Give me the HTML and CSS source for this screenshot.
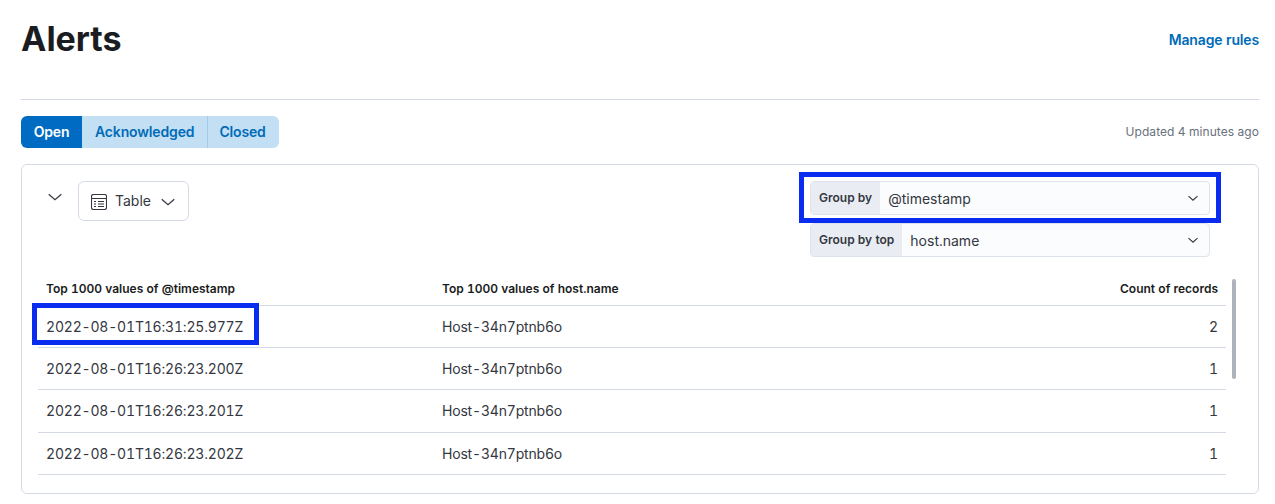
FILE: index.html
```html
<!DOCTYPE html>
<html lang="en">
<head>
  <meta charset="UTF-8" />
  <title>Alerts</title>
  <link rel="stylesheet" href="styles.css">
</head>
<body>

  <div class="page-header">
    <h1>Alerts</h1>
    <a class="manage-link" href="#">Manage rules</a>
  </div>

  <div class="status-row">
    <div class="tabs">
      <button class="tab active">Open</button>
      <button class="tab">Acknowledged</button>
      <button class="tab">Closed</button>
    </div>
    <div class="updated">Updated 4 minutes ago</div>
  </div>

  <div class="panel">
    <div class="toolbar">
      <div class="toolbar-left">
        <svg class="collapse" width="16" height="16" viewBox="0 0 16 16"><path d="M1.700 5.200L8 10.800l6.300-5.600" fill="none" stroke="#343741" stroke-width="1.200"/></svg>
        <button class="chart-type">
          <svg width="16" height="16" viewBox="0 0 16 16" fill="none" stroke="#343741" stroke-width="1.100">
            <rect x="0.500" y="0.500" width="15" height="15" rx="2"/>
            <path d="M1 4.500h14M3 7.500h2M3 10h2M3 12.500h2M7 7.500h6M7 10h6M7 12.500h6"/>
          </svg>
          <span class="chart-type-name">Table</span>
          <svg class="chart-type-arrow" width="16" height="16" viewBox="0 0 16 16"><path d="M1.700 5.200L8 10.800l6.300-5.600" fill="none" stroke="#343741" stroke-width="1.200"/></svg>
        </button>
      </div>
      <div class="selects">
        <div class="select highlighted">
          <div class="select-label">Group by</div>
          <div class="select-value">@timestamp</div>
          <svg width="12" height="12" viewBox="0 0 16 16"><path d="M2 5.500l6 5.500 6-5.500" fill="none" stroke="#343741" stroke-width="1.500"/></svg>
        </div>
        <div class="select">
          <div class="select-label">Group by top</div>
          <div class="select-value">host.name</div>
          <svg width="12" height="12" viewBox="0 0 16 16"><path d="M2 5.500l6 5.500 6-5.500" fill="none" stroke="#343741" stroke-width="1.500"/></svg>
        </div>
      </div>
    </div>

    <div class="table-wrap">
      <table>
        <thead>
          <tr>
            <th class="col-time">Top 1000 values of @timestamp</th>
            <th>Top 1000 values of host.name</th>
            <th class="num">Count of records</th>
          </tr>
        </thead>
        <tbody>
          <tr>
            <td class="highlighted-cell">2022-08-01T16:31:25.977Z</td>
            <td>Host-34n7ptnb6o</td>
            <td class="num">2</td>
          </tr>
          <tr>
            <td>2022-08-01T16:26:23.200Z</td>
            <td>Host-34n7ptnb6o</td>
            <td class="num">1</td>
          </tr>
          <tr>
            <td>2022-08-01T16:26:23.201Z</td>
            <td>Host-34n7ptnb6o</td>
            <td class="num">1</td>
          </tr>
          <tr>
            <td>2022-08-01T16:26:23.202Z</td>
            <td>Host-34n7ptnb6o</td>
            <td class="num">1</td>
          </tr>
        </tbody>
      </table>
      <div class="scrollbar"></div>
    </div>
  </div>

</body>
</html>
```

FILE: styles.css
```css
html, body {
  margin: 0;
  padding: 0;
  background: #fff;
}

body {
  padding: 0 16px 0 21px;
  font-family: Inter, "Liberation Sans", sans-serif;
  font-variant-numeric: tabular-nums;
  color: #343741;
}

/* title row */
.page-header {
  display: flex;
  justify-content: space-between;
  align-items: center;
  height: 100px;
  padding-bottom: 21px;
  box-sizing: border-box;
  border-bottom: 1px solid #d3dae6;
}
.page-header h1 {
  margin: 0;
  font-size: 34px;
  line-height: 40px;
  font-weight: 700;
  color: #1a1c21;
}
.manage-link {
  font-size: 14px;
  font-weight: 600;
  letter-spacing: -0.150px;
  color: #006bb8;
  text-decoration: none;
}

/* open / acknowledged / closed */
.status-row {
  display: flex;
  justify-content: space-between;
  align-items: center;
  margin-top: 16px;
}
.tabs {
  display: flex;
  height: 32px;
  border-radius: 6px;
  overflow: hidden;
}
.tab {
  border: none;
  padding: 0 13px 2px 11px;
  background: #c2dff3;
  color: #006bb8;
  font-family: inherit;
  font-size: 14px;
  font-weight: 600;
  letter-spacing: -0.150px;
}
.tab + .tab {
  border-left: 1px solid #a2cbe9;
}
.tab.active {
  width: 61px;
  padding: 0 0 2px;
  background: #006bc2;
  color: #fff;
}
.tab.active + .tab {
  border-left: none;
  padding: 0 13px 2px;
}
.updated {
  padding-bottom: 2px;
  font-size: 12px;
  letter-spacing: 0.070px;
  color: #69707d;
}

/* panel */
.panel {
  margin-top: 16px;
  height: 330px;
  box-sizing: border-box;
  padding: 16px 22px 0 16px;
  border: 1px solid #d3dae6;
  border-radius: 6px;
}
.toolbar {
  display: flex;
  justify-content: space-between;
  align-items: flex-start;
  padding-right: 26px;
}
.toolbar-left {
  display: flex;
  align-items: flex-start;
}
.collapse {
  margin: 8px 15px 0 9px;
}
.chart-type {
  display: flex;
  align-items: center;
  gap: 8px;
  width: 111px;
  height: 40px;
  padding: 2px 12px 0;
  box-sizing: border-box;
  background: #fff;
  border: 1px solid #d3dae6;
  border-radius: 6px;
  color: #343741;
  font-family: inherit;
  font-size: 14px;
}
.chart-type-name {
  padding-bottom: 4px;
}
.chart-type-arrow {
  margin-left: 1px;
}

.selects {
  display: flex;
  flex-direction: column;
  gap: 8px;
  width: 400px;
}
.select {
  position: relative;
  display: flex;
  align-items: center;
  height: 34px;
  box-sizing: border-box;
  padding-right: 10px;
  background: #fbfcfd;
  border: 1px solid #dde3ec;
  border-radius: 4px;
}
.select-label {
  display: flex;
  align-items: center;
  align-self: stretch;
  padding: 0 8px 2px;
  background: #e9edf3;
  color: #343741;
  font-size: 12px;
  font-weight: 600;
  border-radius: 3px 0 0 3px;
}
.select-value {
  flex: 1;
  padding-left: 8px;
  font-size: 14px;
}

/* blue annotation boxes on top of the screenshot */
.highlighted::after,
.highlighted-cell::after {
  content: "";
  position: absolute;
  border: 5px solid #0a2cf0;
  pointer-events: none;
}
.highlighted::after {
  top: -10px;
  bottom: -9px;
  left: -12px;
  right: -12px;
}

/* table */
.table-wrap {
  display: flex;
  gap: 6px;
  margin-top: 15px;
}
table {
  flex: 1;
  border-collapse: collapse;
  table-layout: fixed;
  font-size: 14px;
}
th {
  height: 33px;
  padding: 0 8px 9px;
  box-sizing: border-box;
  text-align: left;
  vertical-align: bottom;
  font-size: 12px;
  font-weight: 600;
  color: #1a1c21;
  border-bottom: 1px solid #d3dae6;
}
th.col-time {
  width: 396px;
}
td {
  height: 42px;
  padding: 0 8px;
  box-sizing: border-box;
  letter-spacing: -0.190px;
  border-bottom: 1px solid #d3dae6;
}
tr:nth-child(3) td {
  height: 43px;
}
.num {
  text-align: right;
}
.highlighted-cell {
  position: relative;
}
.highlighted-cell::after {
  top: -3px;
  bottom: 2px;
  left: -6px;
  right: 175px;
}
.scrollbar {
  width: 4px;
  height: 100px;
  margin-top: 7px;
  background: #aeb2ba;
  border-radius: 2px;
}
```
